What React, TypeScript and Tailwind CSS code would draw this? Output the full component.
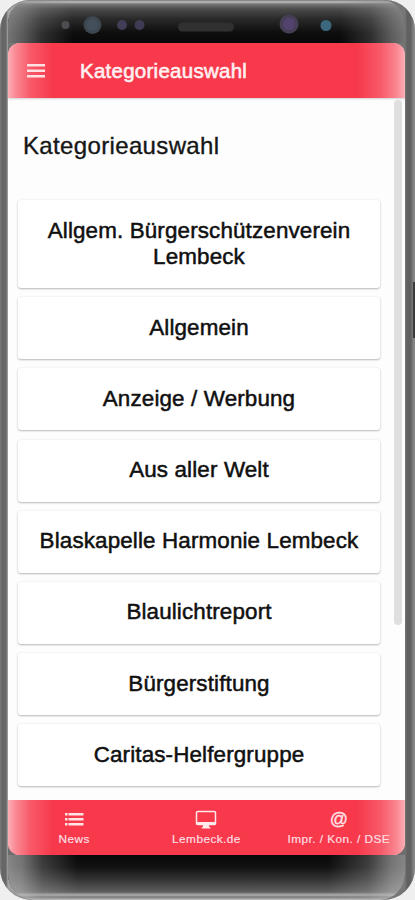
import type { ReactNode } from "react";

interface Tab {
  label: string;
  icon: ReactNode;
}

const categories: string[] = [
  "Allgem. Bürgerschützenverein Lembeck",
  "Allgemein",
  "Anzeige / Werbung",
  "Aus aller Welt",
  "Blaskapelle Harmonie Lembeck",
  "Blaulichtreport",
  "Bürgerstiftung",
  "Caritas-Helfergruppe",
];

const tabs: Tab[] = [
  {
    label: "News",
    icon: (
      <svg width="20" height="20" viewBox="0 0 20 20" fill="#ffe3e5">
        <path d="M1 3h2.500v2.500H1zM4.500 3H19.500v2.500H4.500zM1 8h2.500v2.500H1zM4.500 8H19.500v2.500H4.500zM1 13h2.500v2.500H1zM4.500 13H19.500v2.500H4.500z" />
      </svg>
    ),
  },
  {
    label: "Lembeck.de",
    icon: (
      <svg width="22" height="20" viewBox="0 0 22 20" fill="none">
        <rect x="1.500" y="1.500" width="19" height="13" rx="1.300" stroke="#ffe9eb" strokeWidth="1.500" />
        <path d="M1.500 12h19v2.800H14v1.700l1.500 1.200v.8h-9v-.8L8 16.500v-1.700H1.500z" fill="#ffe9eb" />
      </svg>
    ),
  },
  {
    label: "Impr. / Kon. / DSE",
    icon: (
      <span className="block h-5 text-[18px] leading-[18px] [-webkit-text-stroke:0.3px_#fff0f1]">@</span>
    ),
  },
];

// Light falling in from both curved edges of the glass
function EdgeGlow() {
  return (
    <div className="pointer-events-none absolute inset-0 bg-[linear-gradient(90deg,rgba(255,255,255,0.6)_0px,rgba(255,255,255,0.4)_8px,rgba(255,255,255,0.17)_22px,rgba(255,255,255,0)_45px,rgba(255,255,255,0)_calc(100%-48px),rgba(255,255,255,0.17)_calc(100%-24px),rgba(255,255,255,0.4)_calc(100%-8px),rgba(255,255,255,0.6)_100%)]" />
  );
}

function Sensors() {
  return (
    <svg className="relative block" width="397" height="43" viewBox="8 0 397 43">
      <circle cx="65.500" cy="25" r="4" fill="#4b4d51" />
      <circle cx="92.500" cy="25" r="9" fill="#3d4750" />
      <circle cx="92.500" cy="25" r="6" fill="#43505b" />
      <circle cx="122" cy="25" r="5" fill="#413e57" />
      <circle cx="139.500" cy="25" r="5" fill="#3f3b55" />
      <rect x="178" y="22.500" width="56" height="9" rx="4.500" fill="#303030" />
      <circle cx="289" cy="24" r="9.500" fill="#453e54" />
      <circle cx="289" cy="24" r="6" fill="#51436d" />
      <circle cx="326" cy="25.500" r="5.500" fill="#3b687f" />
    </svg>
  );
}

export default function App() {
  return (
    <div className="h-[900px] w-[415px] overflow-hidden bg-[#efefef] font-['Liberation_Sans',Arial,sans-serif]">
      <div className="relative h-full overflow-hidden rounded-t-[30px] rounded-b-[32px] bg-[linear-gradient(90deg,#858585_0px,#656565_2px,#686868_6px,#a5a5a5_8px,#777_calc(100%-10px),#606060_calc(100%-8px),#626262_calc(100%-4px),#999_100%)] pr-2.5 pl-2 shadow-[inset_0_0_2px_#666]">
        <div className="flex h-full flex-col overflow-hidden rounded-t-[24px] rounded-b-[26px] bg-[linear-gradient(180deg,#757575_0px,#757575_460px,#6c6c6c_100%)]">
          {/* Forehead */}
          <div className="relative h-[43px] shrink-0 bg-[linear-gradient(180deg,#777_0px,#c0c0c0_2px,#777_4px,#4b4b4b_9px,#292929_19px,#0d0d0d_33px,#080808_43px)]">
            <div className="absolute inset-0 bg-[linear-gradient(90deg,rgba(160,160,160,0.7)_0px,rgba(150,150,150,0.58)_14px,rgba(140,140,140,0.28)_34px,rgba(130,130,130,0)_65px,rgba(130,130,130,0)_332px,rgba(140,140,140,0.28)_363px,rgba(150,150,150,0.58)_383px,rgba(160,160,160,0.7)_397px)]" />
            <Sensors />
          </div>

          {/* Screen */}
          <div className="flex h-[812px] w-[397px] shrink-0 flex-col overflow-hidden rounded-xl bg-[#fdfdfd]">
            <header className="relative z-10 flex h-[55px] shrink-0 items-center bg-[#f7394b] shadow-[0_1px_2px_rgba(0,0,0,0.18)]">
              <EdgeGlow />
              <svg className="relative ml-[19px]" width="18" height="14" viewBox="0 0 18 14" fill="#ffe0e3">
                <path d="M0 0h18v2.500H0zM0 5.500h18V8H0zM0 11h18v2.500H0z" />
              </svg>
              <h1 className="relative ml-[35px] whitespace-nowrap pt-px text-[20.500px] leading-6 tracking-[0.260px] text-[#fff0f1] [-webkit-text-stroke:0.600px_#fff0f1]">
                Kategorieauswahl
              </h1>
            </header>

            <main className="flex min-h-0 flex-1 overflow-hidden">
              <div className="w-[372px] shrink-0 pl-2.5">
                <h2 className="mt-[34px] ml-[5px] whitespace-nowrap text-[24px] leading-7 tracking-[0.350px] text-[#161616] [-webkit-text-stroke:0.350px_#161616]">
                  Kategorieauswahl
                </h2>
                <div className="mt-10 flex flex-col gap-[9.200px]">
                  {categories.map((name) => (
                    <button
                      key={name}
                      className="flex min-h-[62px] w-full items-center justify-center rounded-[3px] bg-white px-5 pt-[17.500px] pb-[18.500px] text-center text-[22.400px] leading-[26px] tracking-[0.140px] text-[#101010] shadow-[0_1px_2px_rgba(0,0,0,0.26),0_0_3px_rgba(0,0,0,0.06)] [-webkit-text-stroke:0.500px_#101010]"
                    >
                      {name}
                    </button>
                  ))}
                </div>
              </div>
              <div className="mt-0.5 ml-[14px] h-[525px] w-[8px] rounded-full bg-[#dfdfdf]" />
            </main>

            <footer className="relative grid h-[55px] shrink-0 grid-cols-3 bg-[#f7394b] text-[#ffdfe2]">
              <EdgeGlow />
              {tabs.map((tab) => (
                <div key={tab.label} className="relative flex flex-col items-center pt-[10px]">
                  {tab.icon}
                  <span className="mt-[3px] whitespace-nowrap text-[11.800px] leading-[13px] tracking-[0.450px] [-webkit-text-stroke:0.200px_#ffdfe2]">
                    {tab.label}
                  </span>
                </div>
              ))}
            </footer>
          </div>

          {/* Chin */}
          <div className="relative flex-1 bg-[linear-gradient(180deg,#080808_0px,#111_12px,#353535_25px,#5e5e5e_37px,#b0b0b0_40px,#777_42px,#c5c5c5_45px)]">
            <div className="absolute inset-0 bg-[linear-gradient(90deg,rgba(185,185,185,0.7)_0px,rgba(185,185,185,0.6)_14px,rgba(160,160,160,0.32)_34px,rgba(140,140,140,0)_70px,rgba(140,140,140,0)_320px,rgba(160,160,160,0.32)_360px,rgba(185,185,185,0.6)_383px,rgba(185,185,185,0.7)_397px)]" />
          </div>
        </div>

        {/* Power key */}
        <div className="absolute top-[282px] right-0 h-[56px] w-0.5 bg-[#3b3b3b]" />
      </div>
    </div>
  );
}
